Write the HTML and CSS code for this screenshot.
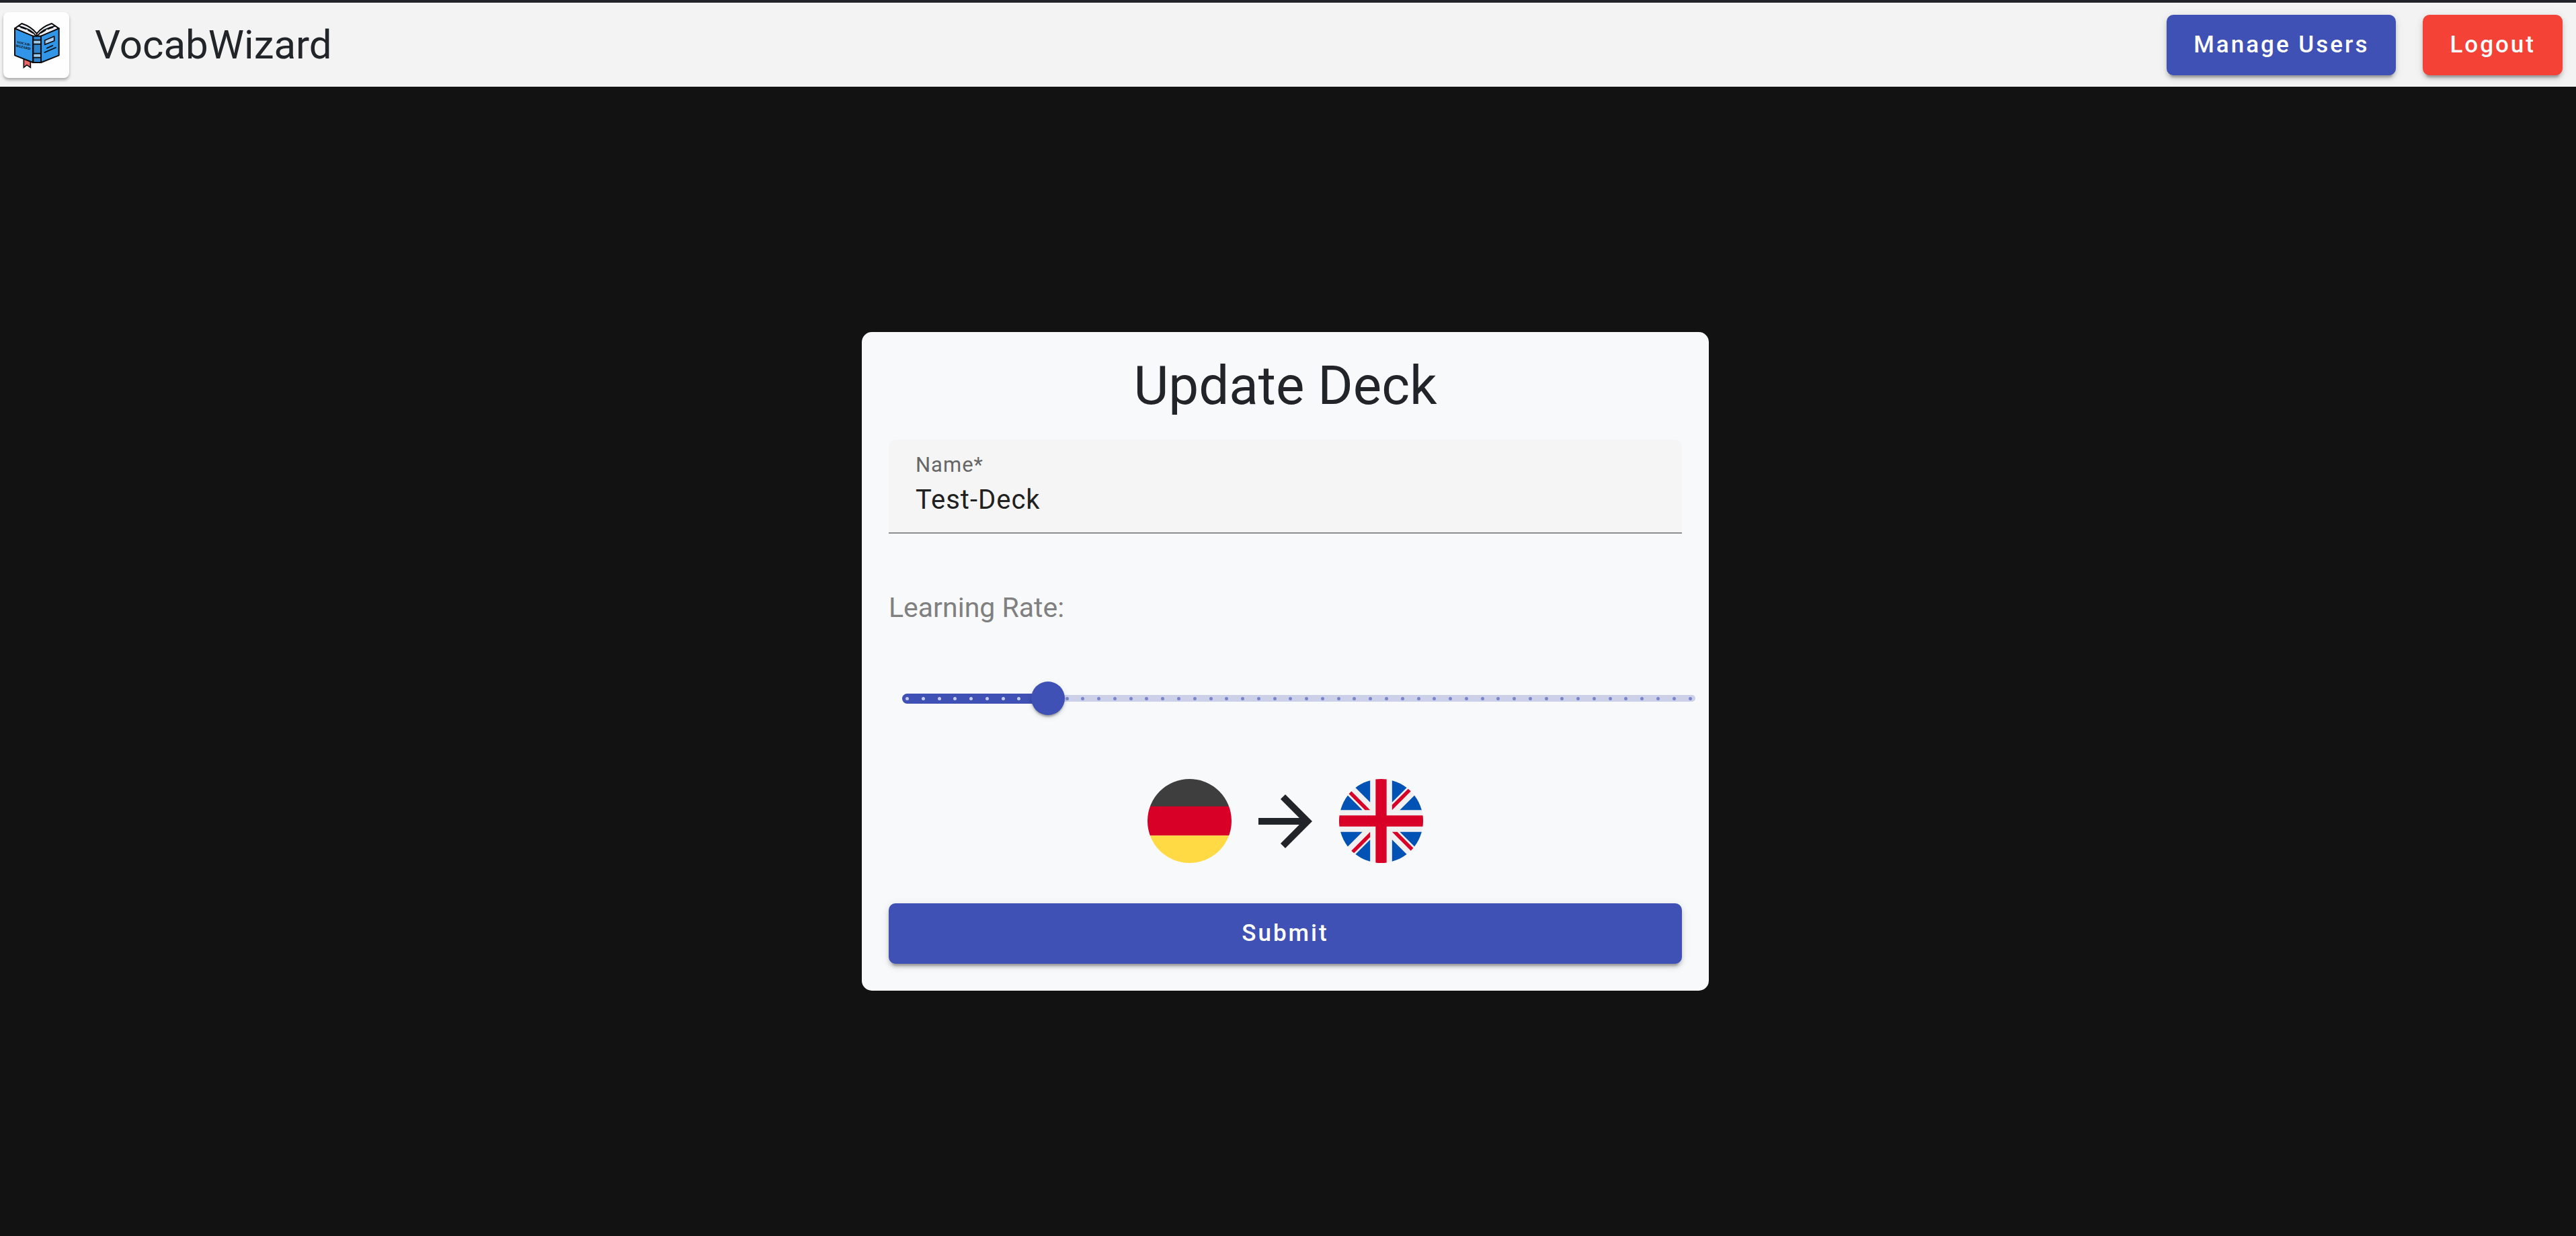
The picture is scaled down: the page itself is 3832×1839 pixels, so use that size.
FILE: index.html
```html
<!DOCTYPE html>
<html lang="en">
<head>
<meta charset="utf-8">
<meta name="viewport" content="width=device-width, initial-scale=1">
<title>VocabWizard</title>
<link rel="stylesheet" href="styles.css">
</head>
<body>
<header class="toolbar">
  <a class="logo" href="#" aria-label="Home">
    <svg class="logo-image" viewBox="15 51 294 294" aria-hidden="true">
      <path d="M106 258v40l14-11 16 11v-40z" fill="#ec6667" stroke="#0b0b0b" stroke-width="5"/>
      <path d="M66 124L97 102Q140 116 164 147Q188 116 231 102L263 124L183 160H147z" fill="#eceff6" stroke="#0b0b0b" stroke-width="6" stroke-linejoin="round"/>
      <path d="M66 124L147 158V276L66 244z" fill="#3296e8" stroke="#0b0b0b" stroke-width="6" stroke-linejoin="round"/>
      <path d="M263 124L183 158V276L263 244z" fill="#3296e8" stroke="#0b0b0b" stroke-width="6" stroke-linejoin="round"/>
      <path d="M148 158H183V276H148z" fill="#2f83cb" stroke="#0b0b0b" stroke-width="6"/>
      <path d="M151 178h29v14h-29zM151 238h29v14h-29z" fill="#9cc8ea"/>
      <path d="M149 176h33M149 194h33M149 236h33M149 254h33" stroke="#0b0b0b" stroke-width="5"/>
      <path d="M82 113Q138 126 160 156M247 113Q190 126 168 156M93 119L115 127M126 132L146 144M236 119L214 127M203 132L183 144M164 146V158" fill="none" stroke="#0b0b0b" stroke-width="5" stroke-linecap="round"/>
      <path d="M200 177L242 159V179L200 196z" fill="#a9cdf0" stroke="#0b0b0b" stroke-width="5" stroke-linejoin="round"/>
      <path d="M209 212L235 200M199 231L249 209" stroke="#0b0b0b" stroke-width="5" stroke-linecap="round"/>
      <g class="logo-text" transform="rotate(12 105 200)">
        <text x="105" y="196" text-anchor="middle">VOCAB-</text>
        <text x="105" y="213" text-anchor="middle">WIZARD</text>
      </g>
    </svg>
  </a>
  <span class="brand">VocabWizard</span>
  <nav class="actions">
    <button class="button" type="button">Manage Users</button>
    <button class="button button-warn" type="button">Logout</button>
  </nav>
</header>
<main class="page">
  <form class="card">
    <h1 class="card-title">Update Deck</h1>
    <div class="field">
      <label class="field-label" for="name">Name*</label>
      <input class="field-input" id="name" type="text" value="Test-Deck" required>
    </div>
    <label class="rate-label" for="rate">Learning Rate:</label>
    <div class="slider">
      <div class="slider-rail"></div>
      <div class="slider-fill" style="width: 18.37%"></div>
      <div class="slider-ticks">
        <i></i><i></i><i></i><i></i><i></i><i></i><i></i><i></i><i></i><i></i>
        <i></i><i></i><i></i><i></i><i></i><i></i><i></i><i></i><i></i><i></i>
        <i></i><i></i><i></i><i></i><i></i><i></i><i></i><i></i><i></i><i></i>
        <i></i><i></i><i></i><i></i><i></i><i></i><i></i><i></i><i></i><i></i>
        <i></i><i></i><i></i><i></i><i></i><i></i><i></i><i></i><i></i><i></i>
      </div>
      <input class="slider-input" id="rate" type="range" min="1" max="50" value="10">
    </div>
    <div class="languages">
      <svg class="flag" viewBox="0 0 512 512" role="img" aria-label="German">
        <clipPath id="disc"><circle cx="256" cy="256" r="256"/></clipPath>
        <g clip-path="url(#disc)">
          <path fill="#3e3e3e" d="M0 0h512v168H0z"/>
          <path fill="#d80027" d="M0 167h512v178H0z"/>
          <path fill="#ffda44" d="M0 345h512v167H0z"/>
        </g>
      </svg>
      <svg class="arrow" viewBox="0 0 24 24" aria-hidden="true"><path fill="#212529" d="M12 4l-1.41 1.41L16.17 11H4v2h12.17l-5.58 5.59L12 20l8-8z"/></svg>
      <svg class="flag" viewBox="0 0 512 512" role="img" aria-label="English">
        <circle cx="256" cy="256" r="256" fill="#f0f0f0"/>
        <g fill="#0052b4">
          <path d="M52.92 100.142c-20.109 26.163-35.272 56.318-44.101 89.077h133.178z"/>
          <path d="M503.181 189.219c-8.829-32.758-23.993-62.913-44.101-89.076l-89.075 89.076z"/>
          <path d="M8.819 322.784c8.83 32.758 23.993 62.913 44.101 89.075l89.074-89.075z"/>
          <path d="M411.858 52.921c-26.163-20.109-56.317-35.272-89.076-44.102v133.177z"/>
          <path d="M100.142 459.079c26.163 20.109 56.318 35.272 89.076 44.102V370.005z"/>
          <path d="M189.217 8.819c-32.758 8.83-62.913 23.993-89.075 44.101l89.075 89.075z"/>
          <path d="M322.783 503.181c32.758-8.83 62.913-23.993 89.075-44.101l-89.075-89.075z"/>
          <path d="M370.005 322.784l89.075 89.076c20.108-26.162 35.272-56.318 44.101-89.076z"/>
        </g>
        <g fill="#d80027">
          <path d="M509.833 222.609H289.392V2.167C278.461.744 267.317 0 256 0c-11.319 0-22.461.744-33.391 2.167v220.441H2.167C.744 233.539 0 244.683 0 256c0 11.319.744 22.461 2.167 33.391h220.441v220.442C233.539 511.256 244.681 512 256 512c11.317 0 22.461-.743 33.391-2.167V289.392h220.442C511.256 278.461 512 267.319 512 256c0-11.317-.744-22.461-2.167-33.391z"/>
          <path d="M322.783 322.784L437.019 437.02c5.254-5.252 10.266-10.743 15.048-16.435l-97.802-97.802z"/>
          <path d="M189.217 322.784L74.98 437.019c5.252 5.254 10.743 10.266 16.435 15.048l97.802-97.804z"/>
          <path d="M189.217 189.219L74.981 74.98c-5.254 5.252-10.266 10.743-15.048 16.435l97.803 97.803z"/>
          <path d="M322.783 189.219L437.02 74.981c-5.252-5.254-10.743-10.266-16.435-15.047l-97.802 97.803z"/>
        </g>
      </svg>
    </div>
    <button class="button" type="submit">Submit</button>
  </form>
</main>
</body>
</html>
```

FILE: styles.css
```css
* { box-sizing: border-box; }

body {
  display: flex;
  flex-direction: column;
  min-height: 100vh;
  margin: 0;
  background: #121212;
  color: #212529;
  font-family: Roboto, "Liberation Sans", sans-serif;
}

.toolbar {
  display: flex;
  align-items: center;
  gap: 38px;
  padding: 14px 20px 13px 5px;
  border-top: 4px solid #212529;
  background: #f3f3f3;
}

.logo {
  display: block;
  border-radius: 8px;
  background: #fefefe;
  box-shadow: 0 3px 4px rgba(0, 0, 0, .3);
}

.logo-image {
  display: block;
  width: 98px;
  height: 98px;
}

.logo-text {
  fill: #0b0b0b;
  font: bold 14px "DejaVu Serif", serif;
}

.brand { font-size: 60px; line-height: 80px; }

.actions {
  display: flex;
  gap: 40px;
  margin-left: auto;
}

.button {
  height: 90px;
  padding: 0 40px;
  border: 0;
  border-radius: 10px;
  background: #3f51b5;
  box-shadow: 0 8px 3px -5px rgba(0, 0, 0, .2), 0 5px 5px rgba(0, 0, 0, .14), 0 3px 13px rgba(0, 0, 0, .12);
  color: #fff;
  font: 500 35px/90px Roboto, "Liberation Sans", sans-serif;
  letter-spacing: 3px;
  cursor: pointer;
}

.button-warn { background: #f44336; }

.page {
  display: flex;
  flex: 1;
  align-items: center;
  justify-content: center;
  padding-right: 8px;
}

.card {
  display: flex;
  flex-direction: column;
  width: 1260px;
  max-width: 100%;
  padding: 40px;
  border-radius: 15px;
  background: #f8f9fa;
}

.card-title {
  margin: 0 0 40px;
  font-size: 80px;
  font-weight: 400;
  line-height: 80px;
  text-align: center;
}

.field {
  display: flex;
  flex-direction: column;
  gap: 2px;
  padding: 18px 40px;
  border-bottom: 2px solid #8e8e8e;
  border-radius: 10px 10px 0 0;
  background: #f5f5f5;
}

.field-label {
  color: #666;
  font-size: 31px;
  line-height: 40px;
  letter-spacing: 1px;
}

.field-input {
  width: 100%;
  height: 60px;
  padding: 0;
  border: 0;
  outline: 0;
  background: none;
  color: #212121;
  font: 400 40px/60px Roboto, "Liberation Sans", sans-serif;
  letter-spacing: 1px;
}

.rate-label {
  margin-top: 80px;
  color: #808080;
  font-size: 41px;
  line-height: 60px;
}

/* The rail starts 20px in and keeps the full field width. */
.slider {
  position: relative;
  height: 100px;
  margin: 55px -20px 70px 20px;
}

.slider-rail,
.slider-fill,
.slider-ticks {
  position: absolute;
  top: 0;
  bottom: 0;
  left: 0;
  margin: auto 0;
}

.slider-rail {
  right: 0;
  height: 10px;
  border-radius: 5px;
  background: #cdd0e9;
}

.slider-fill {
  height: 15px;
  border-radius: 8px;
  background: #3f51b5;
}

.slider-ticks {
  right: 0;
  display: flex;
  align-items: center;
  justify-content: space-between;
  padding: 0 5px;
}

.slider-ticks i {
  width: 5px;
  height: 5px;
  border-radius: 50%;
  background: #7985cb;
}

.slider-ticks i:nth-child(-n+9) { background: #c5cbe9; }

.slider-input {
  position: absolute;
  top: 0;
  left: -25px;
  width: calc(100% + 50px);
  height: 100%;
  margin: 0;
  background: none;
  appearance: none;
}

.slider-input::-webkit-slider-thumb {
  width: 50px;
  height: 50px;
  border-radius: 50%;
  background: #3f51b5;
  box-shadow: 0 5px 3px -3px rgba(0, 0, 0, .2), 0 3px 3px rgba(0, 0, 0, .14), 0 3px 8px rgba(0, 0, 0, .12);
  appearance: none;
}

.languages {
  display: flex;
  align-items: center;
  justify-content: center;
  gap: 20px;
  margin-bottom: 60px;
}

.flag { width: 125px; height: 125px; }

.arrow { width: 120px; height: 120px; }
```
